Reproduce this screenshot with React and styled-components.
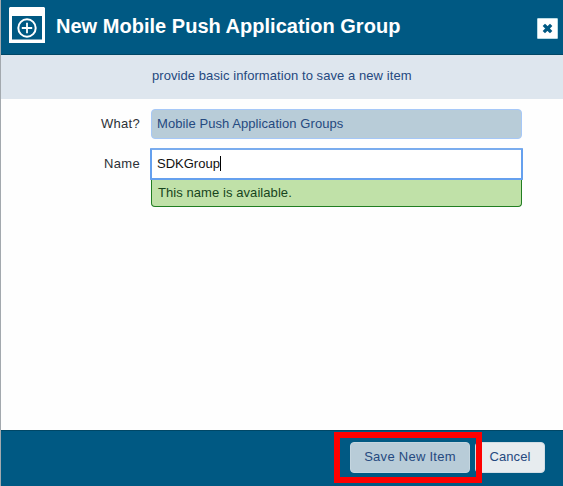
import React from "react";
import styled, { createGlobalStyle } from "styled-components";

const GlobalStyle = createGlobalStyle`
  * { box-sizing: border-box; }
  body {
    margin: 0;
    overflow: hidden;
    background: #fefefe;
    font-family: "Liberation Sans", Arial, sans-serif;
    font-size: 13px;
    letter-spacing: 0.07px;
  }
`;

const Dialog = styled.div`
  display: flex;
  flex-direction: column;
  width: 563px;
  height: 486px;
  border-left: 1px solid #a3a9ae;
  background: #fefefe;
`;

const Header = styled.header`
  display: flex;
  align-items: flex-start;
  height: 55px;
  padding: 7px 5px 0 8px;
  background: #005983;
  border-bottom: 1px solid #004766;
`;

const Title = styled.h1`
  flex: 1;
  margin: 7px 0 0 11px;
  color: #fff;
  font-size: 20px;
  line-height: 24px;
  font-weight: bold;
  letter-spacing: 0.02px;
  white-space: nowrap;
`;

const CloseButton = styled.button`
  display: flex;
  align-items: center;
  justify-content: center;
  width: 21px;
  height: 21px;
  margin-top: 11px;
  padding: 0;
  border: 1px solid #b9dbe5;
  border-radius: 1px;
  background: #fff;
`;

const Hint = styled.div`
  height: 44px;
  padding: 13px 0 0 151px;
  background: #dee6ee;
  color: #25497f;
  line-height: 16px;
`;

const Form = styled.main`
  flex: 1;
  display: grid;
  grid-template-columns: 139px 371px;
  column-gap: 11px;
  row-gap: 10px;
  align-content: start;
  padding-top: 10px;
`;

const Label = styled.label`
  padding-top: 7px;
  color: #2c3136;
  line-height: 16px;
  letter-spacing: 0.3px;
  text-align: right;
`;

const TypeField = styled.div`
  height: 30px;
  padding: 6px 5px;
  border: 1px solid #a6c8f8;
  border-radius: 4px;
  background: #b8ccd8;
  color: #25497f;
  line-height: 16px;
`;

const NameField = styled.div`
  display: flex;
  align-items: center;
  height: 32px;
  margin: -1px -1px 0;
  padding: 0 5px 1px;
  border: 2px solid #65a0ee;
  border-top-color: #7aacee;
  border-radius: 1px;
  background: #fff;
  color: #111;
  letter-spacing: 0;
`;

const Caret = styled.span`
  width: 1px;
  height: 15px;
  background: #000;
`;

const Availability = styled.div`
  height: 27px;
  padding: 5px 6px;
  border: 1px solid #217e21;
  border-top: 0;
  border-radius: 0 0 4px 4px;
  background: #c0e1a8;
  color: #17451d;
  line-height: 16px;
`;

const Footer = styled.footer`
  position: relative;
  display: flex;
  justify-content: flex-end;
  gap: 5px;
  height: 56px;
  padding: 11px 18px 0 0;
  border-top: 1px solid #004766;
  background: #005983;
`;

const FooterButton = styled.button`
  width: ${(p) => p.$width};
  height: 31px;
  padding: 0 0 2px;
  border: 1px solid ${(p) => (p.$primary ? "#c4d5df" : "#d2dde4")};
  border-radius: 4px;
  background: ${(p) => (p.$primary ? "#b8ccd8" : "#e7ecef")};
  color: #25497f;
  font: inherit;
  letter-spacing: ${(p) => p.$spacing};
`;

const Highlight = styled.div`
  position: absolute;
  left: 333px;
  top: 1px;
  width: 148px;
  height: 51px;
  border: 6px solid #fe0000;
  pointer-events: none;
`;

const GroupIcon = () => (
  <svg width="36" height="36" viewBox="0 0 36 36" fill="none" aria-hidden="true">
    <path d="M1 0H35L36 1V36H0V1ZM3 9V32.5H33V9Z" fill="#fff" fillRule="evenodd" />
    <circle cx="18" cy="21" r="8.7" stroke="#fff" strokeWidth="2" />
    <path d="M18 15.8V26.2M12.8 21H23.2" stroke="#fff" strokeWidth="1.8" />
  </svg>
);

const CloseIcon = () => (
  <svg width="11" height="11" viewBox="0 0 11 11" aria-hidden="true">
    <path d="M3 3L8 8M8 3L3 8" stroke="#005983" strokeWidth="3.3" strokeLinecap="square" />
  </svg>
);

export default function App() {
  return (
    <>
      <GlobalStyle />
      <Dialog role="dialog">
        <Header>
          <GroupIcon />
          <Title>New Mobile Push Application Group</Title>
          <CloseButton aria-label="Close"><CloseIcon /></CloseButton>
        </Header>
        <Hint>provide basic information to save a new item</Hint>
        <Form>
          <Label>What?</Label>
          <TypeField>Mobile Push Application Groups</TypeField>
          <Label>Name</Label>
          <div>
            <NameField>SDKGroup<Caret /></NameField>
            <Availability>This name is available.</Availability>
          </div>
        </Form>
        <Footer>
          <FooterButton $primary $width="120px" $spacing="0.27px">Save New Item</FooterButton>
          <FooterButton $width="70px" $spacing="0.1px">Cancel</FooterButton>
          <Highlight />
        </Footer>
      </Dialog>
    </>
  );
}
